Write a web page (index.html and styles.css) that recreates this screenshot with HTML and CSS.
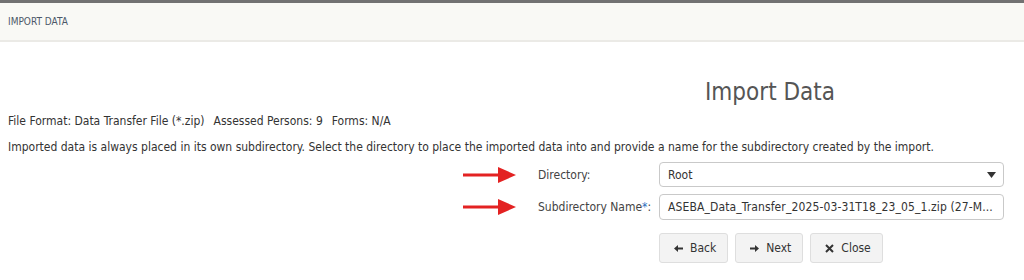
FILE: index.html
```html
<!doctype html>
<html>
  <head>
    <meta charset="utf-8">
    <title>Import Data</title>
    <link rel="stylesheet" href="styles.css">
  </head>
  <body>
    <div class="topbar">
      <span class="crumb">IMPORT DATA</span>
    </div>
    <div class="page">
      <div class="title-row">
        <div></div>
        <h1>Import Data</h1>
      </div>
      <p class="meta">
        <span>File Format: Data Transfer File (*.zip)</span>
        <span>Assessed Persons: 9</span>
        <span>Forms: N/A</span>
      </p>
      <p class="info">Imported data is always placed in its own subdirectory. Select the directory to place the imported data into and provide a name for the subdirectory created by the import.</p>
      <form class="import-form">
        <div class="row">
          <svg class="pointer" width="56" height="18" viewBox="0 0 56 18"><path d="M1 7.5h36v3H1z M36 1l18 8-18 8z" fill="#e32222"/></svg>
          <label>Directory:</label>
          <div class="select">
            <span>Root</span>
            <svg width="9" height="6" viewBox="0 0 9 6"><path d="M0 0h9L4.5 6z" fill="#333"/></svg>
          </div>
        </div>
        <div class="row">
          <svg class="pointer" width="56" height="18" viewBox="0 0 56 18"><path d="M1 7.5h36v3H1z M36 1l18 8-18 8z" fill="#e32222"/></svg>
          <label>Subdirectory Name<span class="req">*</span>:</label>
          <div class="textbox">ASEBA_Data_Transfer_2025-03-31T18_23_05_1.zip (27-M...</div>
        </div>
        <div class="row">
          <span></span>
          <span></span>
          <div class="buttons">
            <button type="button"><svg width="9" height="7" viewBox="0 0 9 7"><path d="M0 3.5L4 0v2.5h5v2H4V7z" fill="#333"/></svg>Back</button>
            <button type="button"><svg width="9" height="7" viewBox="0 0 9 7"><path d="M9 3.5L5 0v2.5H0v2h5V7z" fill="#333"/></svg>Next</button>
            <button type="button"><svg width="9" height="9" viewBox="0 0 9 9"><path d="M1 1l7 7M8 1L1 8" stroke="#333" stroke-width="2"/></svg>Close</button>
          </div>
        </div>
      </form>
    </div>
  </body>
</html>
```

FILE: styles.css
```css
html, body {
  margin: 0;
  padding: 0;
  background: #fff;
}
body {
  font-family: "DejaVu Sans Condensed", "DejaVu Sans", sans-serif;
  font-size: 12px;
  color: #333;
}

.topbar {
  border-top: 3px solid #727272;
  border-bottom: 2px solid #ebeae6;
  background: #f9f9f5;
  height: 37px;
  display: flex;
  align-items: center;
  padding: 0 8px;
}
.crumb {
  font-size: 10px;
  color: #4c5868;
}

.page {
  padding: 0 20px 0 8px;
}

.title-row {
  display: grid;
  grid-template-columns: 1fr 1fr;
  padding-top: 35px;
}
.title-row h1 {
  margin: 0;
  text-align: center;
  font-weight: normal;
  font-size: 24px;
  color: #555;
  line-height: 30px;
  padding-left: 30px;
}

.meta {
  margin: 6px 0 0;
  line-height: 16px;
  display: flex;
  gap: 9px;
}
.info {
  margin: 10px 0 0;
  line-height: 16px;
}

.import-form {
  margin: 7px 0 0 454px;
}
.row {
  display: grid;
  grid-template-columns: 76px 121px 1fr;
  align-items: center;
  margin-bottom: 7px;
}
.row label {
  color: #444;
}
.req {
  color: #2a6ebd;
}
.pointer {
  display: block;
}

.select, .textbox {
  height: 23px;
  border: 1px solid #c9c9c9;
  border-radius: 4px;
  padding: 0 7px 0 8px;
  display: flex;
  align-items: center;
  justify-content: space-between;
  color: #333;
  white-space: nowrap;
  overflow: hidden;
}
.textbox {
  height: 24px;
  letter-spacing: 0.12px;
}

.buttons {
  display: flex;
  gap: 7px;
  margin-top: 6px;
}
.buttons button {
  font: inherit;
  color: #333;
  background: #f3f3f3;
  border: 1px solid #dedede;
  border-radius: 3px;
  height: 30px;
  padding: 0 11px 0 14px;
  display: flex;
  align-items: center;
  gap: 7px;
}
```
